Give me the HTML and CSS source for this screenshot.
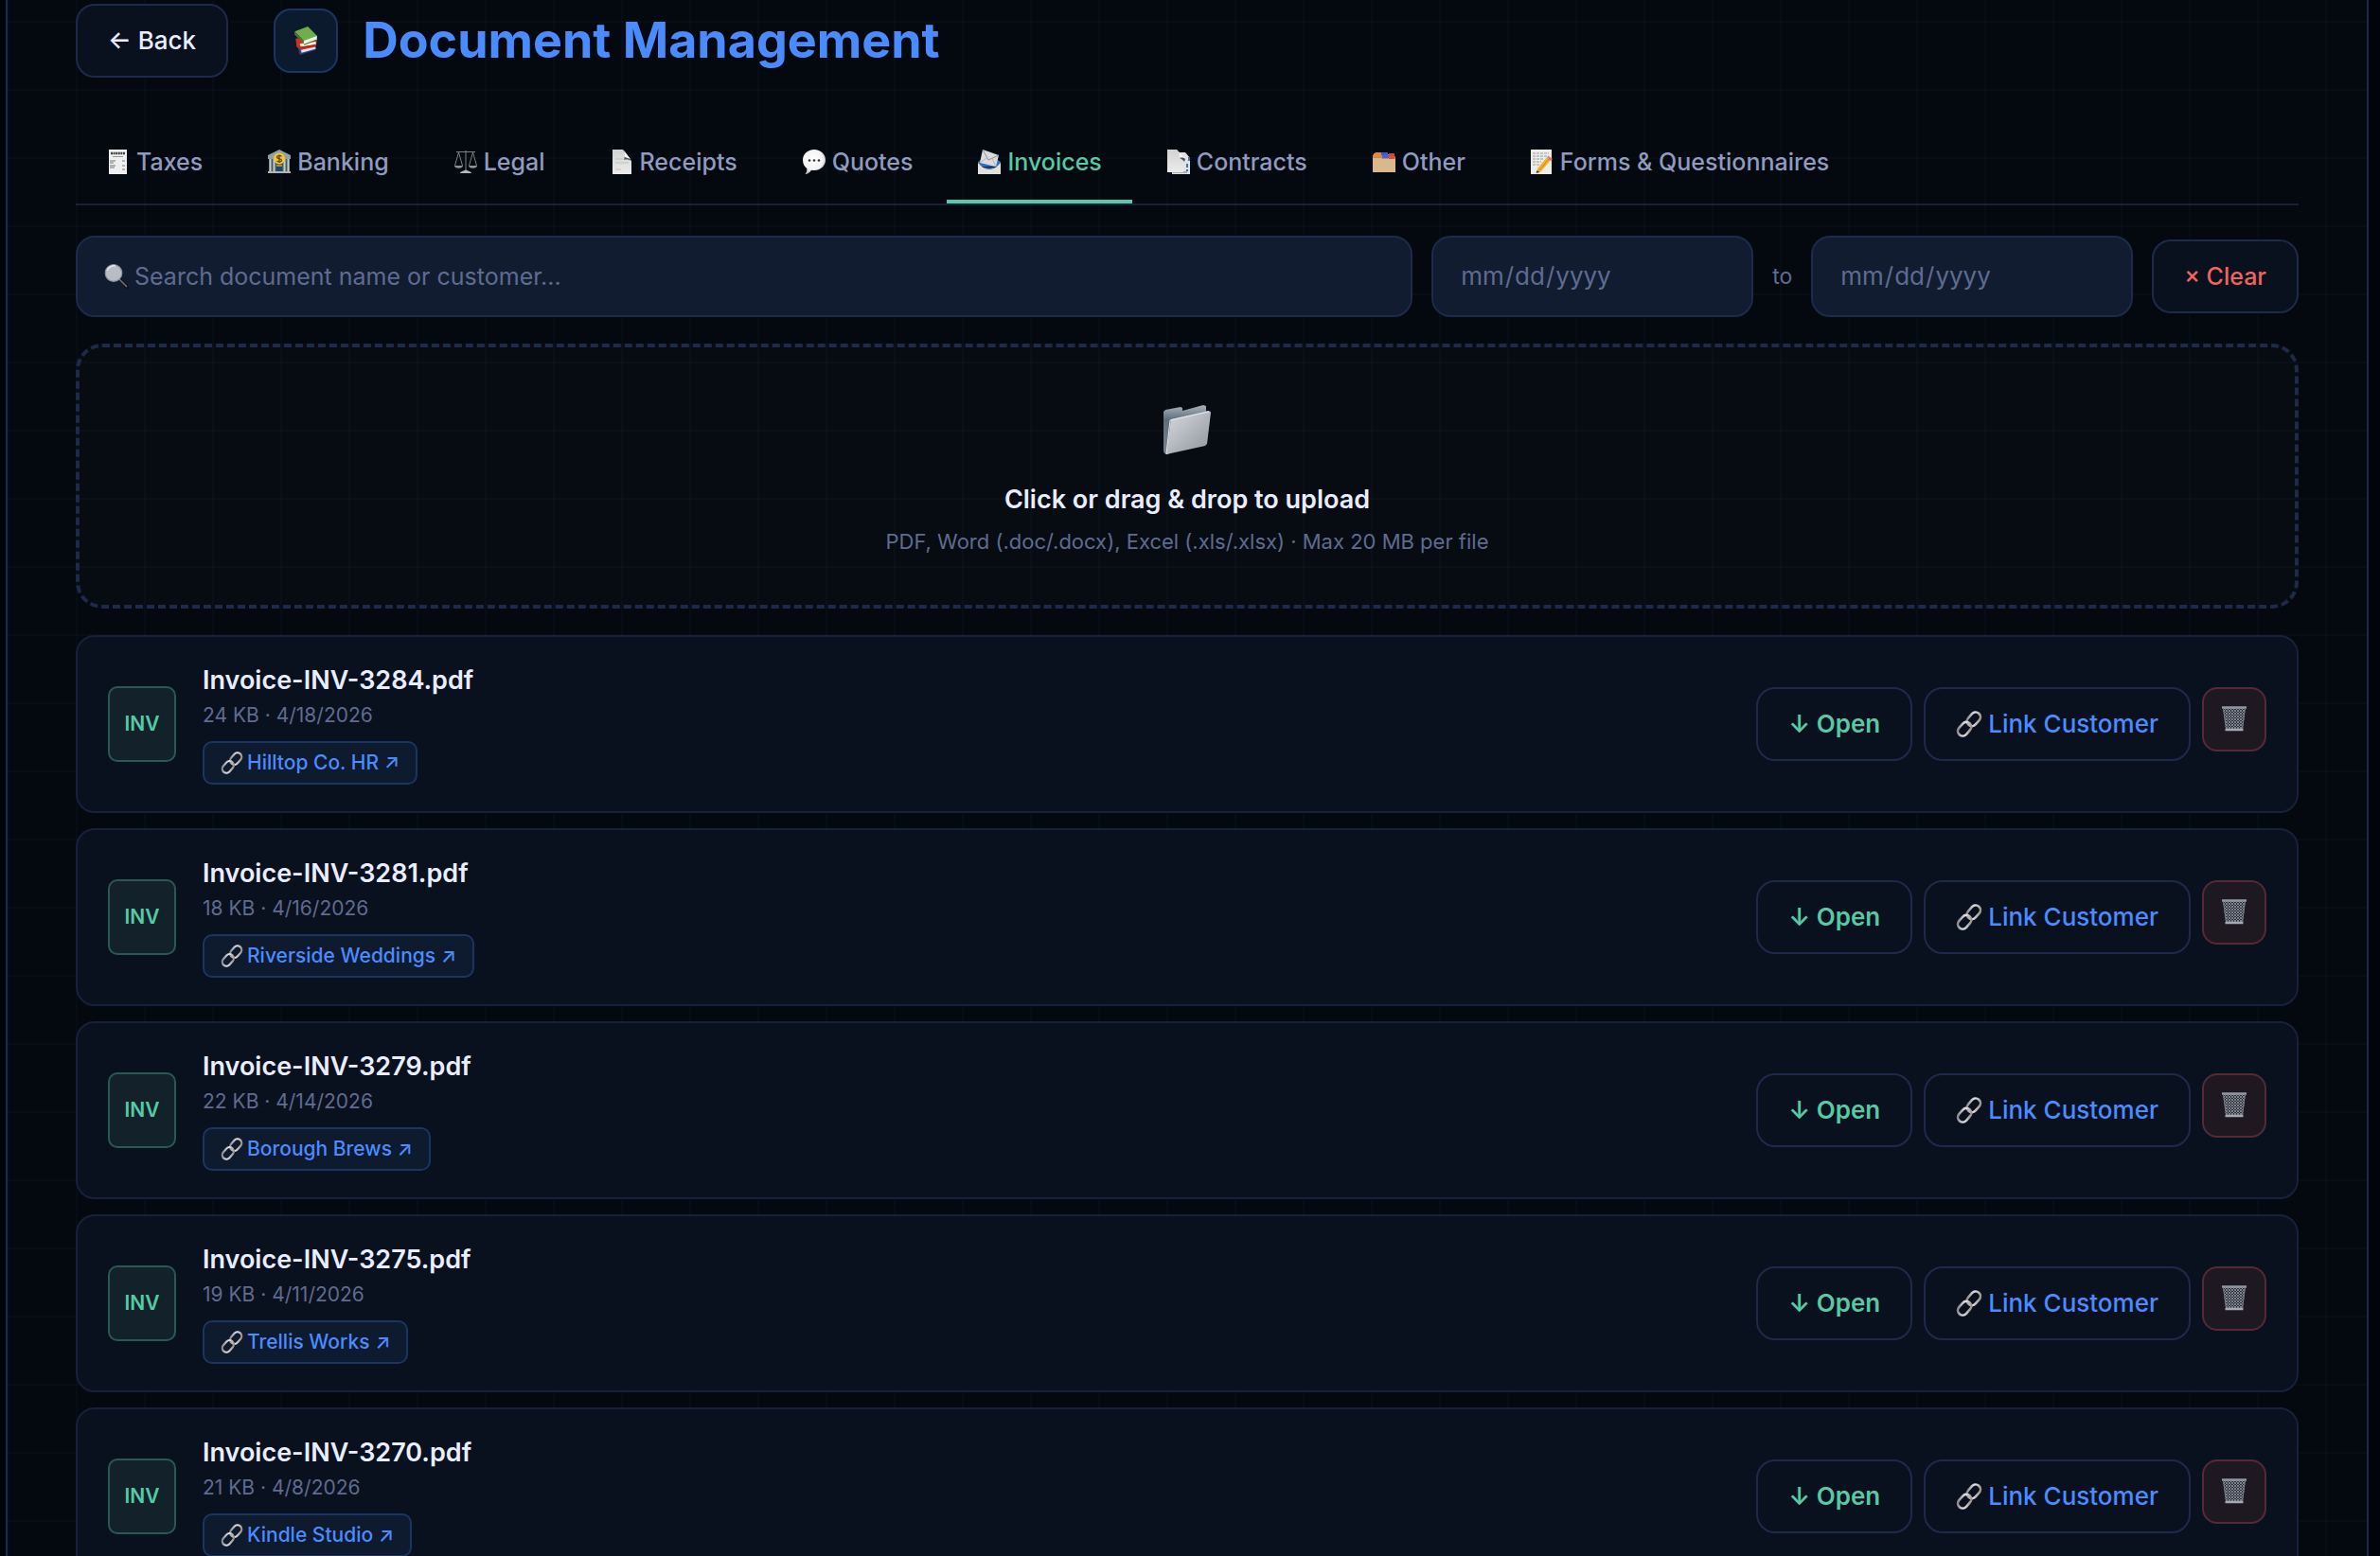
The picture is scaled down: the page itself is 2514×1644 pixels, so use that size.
FILE: index.html
```html
<!DOCTYPE html>
<html lang="en">
<head>
	<meta charset="UTF-8">
	<title>Document Management</title>
	<meta name="viewport" content="width=device-width, initial-scale=1">
	<link rel="stylesheet" href="styles.css">
</head>
<body>
	<!-- icon set -->
	<svg class="sprite" aria-hidden="true">
		<defs>
			<linearGradient id="gPaper" x1="0" y1="0" x2="0" y2="1"><stop offset="0" stop-color="#d2d2d2"/><stop offset="1" stop-color="#ececec"/></linearGradient>
			<linearGradient id="gFront" x1="0" y1="0" x2="1" y2="1"><stop offset="0" stop-color="#d5dae3"/><stop offset=".5" stop-color="#b4b8be"/><stop offset="1" stop-color="#8f9499"/></linearGradient>
			<linearGradient id="gBack" x1="0" y1="0" x2="0" y2="1"><stop offset="0" stop-color="#a9b3bd"/><stop offset=".3" stop-color="#5e6c7a"/><stop offset="1" stop-color="#7c858e"/></linearGradient>
			<linearGradient id="gMetal" x1="0" y1="0" x2="1" y2="1"><stop offset="0" stop-color="#77757a"/><stop offset=".5" stop-color="#e4e4ea"/><stop offset="1" stop-color="#8a8078"/></linearGradient>
			<radialGradient id="gBubble" cx=".45" cy=".4" r=".6"><stop offset="0" stop-color="#fff"/><stop offset=".7" stop-color="#f2f2f2"/><stop offset="1" stop-color="#bdbdbd"/></radialGradient>
			<pattern id="pMesh" width="3" height="3" patternUnits="userSpaceOnUse"><path d="M0 0l3 3M3 0L0 3" stroke="#8d95a3" stroke-width=".8"/></pattern>
		</defs>
		<symbol id="books" viewBox="0 0 24 28">
			<path d="M4 19l15-3 3 7-16 5z" fill="#2b3f9b"/><path d="M7 23l14-4 1 3-14 4z" fill="#e8e6e1"/>
			<path d="M2 12l15-2 6 4-1 6-15 3-4-3z" fill="#d2301f"/><path d="M6 17l16-2v3L7 20z" fill="#f1efe9"/><path d="M6 21l16-3" stroke="#a01c12" stroke-width="1"/>
			<path d="M1 5L14 0l9 9-13 5z" fill="#6fae4c"/><path d="M1 5l9 9v3L1 8z" fill="#3f7d2b"/><path d="M10 14l13-5v4l-13 5z" fill="#eef1ea"/><path d="M10 18l13-5" stroke="#3f7d2b" stroke-width="1"/>
		</symbol>
		<symbol id="receipt" viewBox="0 0 26 26">
			<path d="M3 0h19v26H3z" fill="#efefef"/><path d="M5 4h15" stroke="#444" stroke-width="2.4" stroke-dasharray="2 .6"/><path d="M7 7.500h11" stroke="#999" stroke-width="1"/>
			<path d="M4 12h6M4 14h4M4 17h6M4 19h5M17 12h3M17 17h3M17 21h3" stroke="#777" stroke-width="1.200"/>
		</symbol>
		<symbol id="bank" viewBox="0 0 26 26">
			<path d="M13 0l12 6v4H1V6z" fill="#8fa3a3"/><path d="M2 10h22v14H2z" fill="#4c5a5c"/><path d="M3.500 10v13M7.500 10v13M18.500 10v13M22.500 10v13" stroke="#c3cfcf" stroke-width="2"/>
			<path d="M10 16h6v8h-6z" fill="#174a78"/><path d="M10 17h6" stroke="#d9a42c" stroke-width="1.500"/><path d="M1 24h24" stroke="#b4b4aa" stroke-width="2"/>
			<circle cx="13" cy="9.500" r="6" fill="#f2c62e"/><path d="M15.500 7.500c-1-1.500-5-1.400-5 .5 0 2.200 5 1.200 5 3.500 0 1.800-4 2-5 .3M13 5.500v8.500" fill="none" stroke="#5c4a10" stroke-width="1.300"/>
		</symbol>
		<symbol id="scales" viewBox="0 0 26 26">
			<path d="M3 2.500h20M13 1v20M5.500 3L1.500 17M5.500 3l4 14M20.500 3l-4 14M20.500 3l4 14" fill="none" stroke="#7d8088" stroke-width="1"/>
			<path d="M1 17h9c0 3.500-9 3.500-9 0zM16 17h9c0 3.500-9 3.500-9 0z" fill="#8f929a"/><path d="M7 25c0-2 4-2 6-4 2 2 6 2 6 4z" fill="#b5b7bd"/>
		</symbol>
		<symbol id="page" viewBox="0 0 26 26">
			<path d="M3 0h11l9 12v14H3z" fill="url(#gPaper)"/><path d="M14 0c3 4 2 8 1 11 3-1 6 0 8 1z" fill="#55585c"/><path d="M15 1l7 9-6-2z" fill="#f7f7f7"/><path d="M6 10h8M6 14h14M6 21h6" stroke="#c2c2c2" stroke-width="1"/>
		</symbol>
		<symbol id="bubble" viewBox="0 0 26 26">
			<path d="M13 0c7 0 12 5 12 11S20 22 13 22c-1 0-2 0-3-.3C8.500 24 6 26 3.500 26c1.500-2 2-3.500 1.800-6C2.500 18 1 15 1 11 1 5 6 0 13 0z" fill="url(#gBubble)"/>
			<circle cx="8" cy="11.500" r="1.300" fill="#333"/><circle cx="13" cy="11.500" r="1.300" fill="#333"/><circle cx="18" cy="11.500" r="1.300" fill="#333"/>
		</symbol>
		<symbol id="envelope" viewBox="0 0 26 26">
			<path d="M1 13l3-2h18l3 2v5H1z" fill="#2e6fc0"/><path d="M6 0l17 6-3 12-17-4z" fill="#d9dbdd"/><path d="M6 0l6 11 11-5" fill="none" stroke="#8e9296" stroke-width="1"/><path d="M3 14l7-5M20 18l-4-9" stroke="#a9acb0" stroke-width=".8"/>
			<path d="M1 14l4 4c4 3 12 3 16 0l4-4v12H1z" fill="#e3e0dc"/><path d="M6 18c3 4 11 4 14 0-3 1.500-11 1.500-14 0z" fill="#2e6fc0"/>
		</symbol>
		<symbol id="pages" viewBox="0 0 26 26">
			<path d="M8 3h12l5 6v17H6z" fill="#e2e2e2"/><path d="M24 8v4M22 15v4M22 21v2" stroke="#2b78c6" stroke-width="2"/><path d="M7 24h15" stroke="#777" stroke-width="1"/>
			<path d="M1 0h10l9 10-2 14H1z" fill="url(#gPaper)"/><path d="M11 0c3 2 3 6 3 9 3 0 5 0 6 1z" fill="#f3f3f3"/><path d="M14 9c3-1 5 0 6 1l-1 3c-1-2-3-3-5-4z" fill="#4b4e52"/>
		</symbol>
		<symbol id="dividers" viewBox="0 0 26 26">
			<path d="M1 6l3-3h6l1 2h12l2 3v15H1z" fill="#c28e54"/><path d="M2 4h7v4H2z" fill="#e8893a"/><path d="M10 3h7v3h-7z" fill="#3d57d6"/><path d="M18 4h6v3h-6z" fill="#d9443c"/><path d="M11 6h7v3h-7z" fill="#4663e0"/><path d="M18 7h6v3h-6z" fill="#db4f40"/>
			<path d="M1 9h9l1 1h14v14H1z" fill="#d9b98b"/>
		</symbol>
		<symbol id="memo" viewBox="0 0 26 26">
			<path d="M1 0h22v26H1z" fill="#ececea"/><path d="M3 4h17M3 7h17M3 10h12M3 13h9M3 16h7" stroke="#9a9a9a" stroke-width="1" stroke-dasharray="3 1"/>
			<path d="M8 20L18 8l4 3-10 12-5 2z" fill="#f0b429"/><path d="M18 8l2-1 4 3-2 2z" fill="#e5736c"/><path d="M10 22l10-12" stroke="#c9851a" stroke-width="1"/><path d="M7.500 22l3 2-4 1z" fill="#444"/>
		</symbol>
		<symbol id="magnifier" viewBox="0 0 26 26">
			<path d="M17 16l7 8" stroke="#141416" stroke-width="4" stroke-linecap="round"/><path d="M16 16l8 8" stroke="#77787c" stroke-width="1.500"/>
			<circle cx="10" cy="9.500" r="8.800" fill="#b9bcc3" stroke="#8f959c" stroke-width="1.200"/><path d="M3 7c1-3 5-6 9-5" fill="none" stroke="#e2e9f2" stroke-width="1.500"/>
		</symbol>
		<symbol id="folder" viewBox="0 0 52 52">
			<path d="M1 7l2-2 16-3 2 1v3l22-6 3 1v10L6 52c-4 0-5-2-5-5z" fill="url(#gBack)"/><path d="M9 15l39-9c2 0 3 1 3 2l-4 33-2 2L4 52z" fill="url(#gFront)"/><path d="M4 52L8 16l41-9" fill="none" stroke="#e4e8ee" stroke-width="1"/>
		</symbol>
		<symbol id="link" viewBox="0 0 26 26">
			<g fill="none" stroke="url(#gMetal)" stroke-width="2.400"><rect x="-7.500" y="-4.800" width="15" height="9.600" rx="4.800" transform="translate(17.500 8.200) rotate(-48)"/><rect x="-7.500" y="-4.800" width="15" height="9.600" rx="4.800" transform="translate(8.500 17.800) rotate(-48)"/></g>
		</symbol>
		<symbol id="trash" viewBox="0 0 28 28">
			<path d="M2 2h24l-3 24H5z" fill="#2f3138"/><path d="M2 2h24l-3 24H5z" fill="url(#pMesh)"/><path d="M1 2.500h26" stroke="#8f98a3" stroke-width="2.500"/><path d="M4.500 26h19" stroke="#a3a9b1" stroke-width="2.500"/><path d="M2.500 3l3 22M25.500 3l-3 22" stroke="#767c86" stroke-width="1"/>
		</symbol>
	</svg>

	<main class="shell">
		<header class="page-head">
			<button class="btn btn-back" type="button">← Back</button>
			<span class="head-icon"><svg class="ico-books"><use href="#books"/></svg></span>
			<h1>Document Management</h1>
		</header>

		<nav class="tabs">
			<a class="tab" href="#"><svg class="ico"><use href="#receipt"/></svg>Taxes</a>
			<a class="tab" href="#"><svg class="ico"><use href="#bank"/></svg>Banking</a>
			<a class="tab" href="#"><svg class="ico"><use href="#scales"/></svg>Legal</a>
			<a class="tab" href="#"><svg class="ico"><use href="#page"/></svg>Receipts</a>
			<a class="tab" href="#"><svg class="ico"><use href="#bubble"/></svg>Quotes</a>
			<a class="tab active" href="#"><svg class="ico"><use href="#envelope"/></svg>Invoices</a>
			<a class="tab" href="#"><svg class="ico"><use href="#pages"/></svg>Contracts</a>
			<a class="tab" href="#"><svg class="ico"><use href="#dividers"/></svg>Other</a>
			<a class="tab" href="#"><svg class="ico"><use href="#memo"/></svg>Forms &amp; Questionnaires</a>
		</nav>

		<form class="filters">
			<label class="field search">
				<svg class="ico"><use href="#magnifier"/></svg>
				<input type="text" placeholder="Search document name or customer..." aria-label="Search documents">
			</label>
			<input class="field date" type="date" id="from" aria-label="From date">
			<label class="to" for="until">to</label>
			<input class="field date" type="date" id="until">
			<button class="btn btn-clear" type="reset">× Clear</button>
		</form>

		<button class="dropzone" type="button">
			<svg class="ico-folder"><use href="#folder"/></svg>
			<span class="drop-title">Click or drag &amp; drop to upload</span>
			<span class="drop-hint">PDF, Word (.doc/.docx), Excel (.xls/.xlsx) · Max 20 MB per file</span>
		</button>

		<section class="docs">
			<article class="doc">
				<span class="badge">INV</span>
				<div class="info">
					<div class="name">Invoice-INV-3284.pdf</div>
					<div class="meta">24 KB · 4/18/2026</div>
					<a class="chip" href="#"><svg class="ico"><use href="#link"/></svg>Hilltop Co. HR ↗</a>
				</div>
				<div class="actions">
					<button class="btn btn-open" type="button">↓ Open</button>
					<button class="btn btn-link" type="button"><svg class="ico"><use href="#link"/></svg>Link Customer</button>
					<button class="btn-del" type="button" aria-label="Delete"><svg class="ico-trash"><use href="#trash"/></svg></button>
				</div>
			</article>
			<article class="doc">
				<span class="badge">INV</span>
				<div class="info">
					<div class="name">Invoice-INV-3281.pdf</div>
					<div class="meta">18 KB · 4/16/2026</div>
					<a class="chip" href="#"><svg class="ico"><use href="#link"/></svg>Riverside Weddings ↗</a>
				</div>
				<div class="actions">
					<button class="btn btn-open" type="button">↓ Open</button>
					<button class="btn btn-link" type="button"><svg class="ico"><use href="#link"/></svg>Link Customer</button>
					<button class="btn-del" type="button" aria-label="Delete"><svg class="ico-trash"><use href="#trash"/></svg></button>
				</div>
			</article>
			<article class="doc">
				<span class="badge">INV</span>
				<div class="info">
					<div class="name">Invoice-INV-3279.pdf</div>
					<div class="meta">22 KB · 4/14/2026</div>
					<a class="chip" href="#"><svg class="ico"><use href="#link"/></svg>Borough Brews ↗</a>
				</div>
				<div class="actions">
					<button class="btn btn-open" type="button">↓ Open</button>
					<button class="btn btn-link" type="button"><svg class="ico"><use href="#link"/></svg>Link Customer</button>
					<button class="btn-del" type="button" aria-label="Delete"><svg class="ico-trash"><use href="#trash"/></svg></button>
				</div>
			</article>
			<article class="doc">
				<span class="badge">INV</span>
				<div class="info">
					<div class="name">Invoice-INV-3275.pdf</div>
					<div class="meta">19 KB · 4/11/2026</div>
					<a class="chip" href="#"><svg class="ico"><use href="#link"/></svg>Trellis Works ↗</a>
				</div>
				<div class="actions">
					<button class="btn btn-open" type="button">↓ Open</button>
					<button class="btn btn-link" type="button"><svg class="ico"><use href="#link"/></svg>Link Customer</button>
					<button class="btn-del" type="button" aria-label="Delete"><svg class="ico-trash"><use href="#trash"/></svg></button>
				</div>
			</article>
			<article class="doc">
				<span class="badge">INV</span>
				<div class="info">
					<div class="name">Invoice-INV-3270.pdf</div>
					<div class="meta">21 KB · 4/8/2026</div>
					<a class="chip" href="#"><svg class="ico"><use href="#link"/></svg>Kindle Studio ↗</a>
				</div>
				<div class="actions">
					<button class="btn btn-open" type="button">↓ Open</button>
					<button class="btn btn-link" type="button"><svg class="ico"><use href="#link"/></svg>Link Customer</button>
					<button class="btn-del" type="button" aria-label="Delete"><svg class="ico-trash"><use href="#trash"/></svg></button>
				</div>
			</article>
		</section>
	</main>
</body>
</html>
```

FILE: styles.css
```css
:root{
	--line:#1e2a4a;
	--card:#0a111e;
	--field:#111c30;
	--text:#e8eeff;
	--muted:#5f6b90;
	--blue:#4a8cff;
	--green:#56c9a5;
	--red:#f0645f;
}
*{box-sizing:border-box;}
body{
	margin:0;
	background:#02040c;
	color:var(--text);
	font-family:Inter,"Open Sans",sans-serif;
	font-size:25px;
	line-height:32px;
}
button,input{font:inherit;color:inherit;}
button{cursor:pointer;}
a{text-decoration:none;color:inherit;}
.sprite{position:absolute;width:0;height:0;}
.ico{
	flex:none;
	width:26px;height:26px;
}

/* main panel with a faint grid */
.shell{
	height:100vh;
	margin:0 12px 0 6px;
	padding:4px 72px 0;
	overflow:hidden;
	border:solid var(--line);
	border-width:0 2px;
	background:
		linear-gradient(rgba(74,110,220,.035) 2px,transparent 2px) 0 22px / 72px 72px,
		linear-gradient(90deg,rgba(74,110,220,.035) 2px,transparent 2px) 0 0 / 72px 72px,
		#04090f;
}

/* header */
.page-head{
	display:flex;
	align-items:center;
	height:78px;
}
h1{
	margin:0 0 0 26px;
	color:var(--blue);
	font-size:52px;
	line-height:64px;
	font-weight:700;
}
.head-icon{
	display:flex;
	align-items:center;
	justify-content:center;
	width:68px;height:68px;
	margin-left:48px;
	border:2px solid #1b3563;
	border-radius:18px;
	background:#0c1a2d;
}
.ico-books{width:28px;height:30px;}
.btn{
	display:inline-flex;
	align-items:center;
	gap:6px;
	height:78px;
	padding:0 32px;
	border:2px solid var(--line);
	border-radius:20px;
	background:var(--card);
	font-size:26px;
	font-weight:500;
	white-space:nowrap;
}
.btn .ico{width:28px;height:28px;}
.btn-clear{
	color:var(--red);
	font-size:25px;
}
.btn-open{
	color:var(--green);
	font-weight:600;
}
.btn-link{color:var(--blue);}

/* tabs */
.tabs{
	display:flex;
	gap:4px;
	margin-top:44px;
	border-bottom:2px solid #18213b;
}
.tab{
	display:flex;
	align-items:center;
	gap:6px;
	height:89px;
	padding:4px 32px 0;
	border-bottom:4px solid transparent;
	color:#8f9bbf;
	font-weight:500;
}
.tab.active{
	border-color:var(--green);
	color:var(--green);
}

/* filters */
.filters{
	display:flex;
	align-items:center;
	gap:20px;
	margin-top:32px;
}
.field{
	height:86px;
	padding:0 28px;
	border:2px solid var(--line);
	border-radius:20px;
	background:var(--field);
	color:var(--muted);
}
.search{
	display:flex;
	flex:1;
	align-items:center;
	gap:6px;
}
.search input{
	flex:1;
	padding:0;
	border:0;
	outline:0;
	background:none;
}
.search input::placeholder{color:var(--muted);}
.date{
	width:340px;
	font-size:26px;
}
.date::-webkit-calendar-picker-indicator{display:none;}
.to{
	color:var(--muted);
	font-size:23px;
}

/* upload */
.dropzone{
	display:flex;
	flex-direction:column;
	align-items:center;
	width:100%;
	height:280px;
	margin-top:28px;
	padding:61px 0 0;
	border:4px dashed var(--line);
	border-radius:28px;
	background:rgba(255,255,255,.015);
}
.ico-folder{width:52px;height:52px;}
.drop-title{
	margin-top:32px;
	font-size:27px;
	font-weight:600;
}
.drop-hint{
	margin-top:12px;
	color:var(--muted);
	font-size:22px;
}

/* document list */
.docs{
	display:flex;
	flex-direction:column;
	gap:16px;
	margin-top:28px;
}
.doc{
	display:flex;
	align-items:center;
	gap:28px;
	padding:28px 32px;
	border:2px solid #18213b;
	border-radius:20px;
	background:var(--card);
}
.badge{
	display:flex;
	align-items:center;
	justify-content:center;
	width:72px;height:80px;
	border:2px solid #285a53;
	border-radius:10px;
	background:#13222a;
	color:var(--green);
	font-size:21px;
	font-weight:600;
}
.info{flex:1;}
.name{
	font-size:27px;
	line-height:36px;
	font-weight:600;
}
.meta{
	margin-top:3px;
	color:var(--muted);
	font-size:21px;
}
.chip{
	display:inline-flex;
	align-items:center;
	gap:4px;
	height:46px;
	margin-top:11px;
	padding:0 17px;
	border:2px solid #1b3563;
	border-radius:10px;
	background:#0e1a2e;
	color:var(--blue);
	font-size:21px;
	font-weight:500;
	vertical-align:top;
}
.chip .ico{width:24px;height:24px;}
.actions{
	display:flex;
	align-items:flex-start;
	gap:12px;
}
.btn-del{
	display:flex;
	justify-content:center;
	width:68px;height:68px;
	padding:17px 0 0;
	border:2px solid #532b35;
	border-radius:16px;
	background:#1e1821;
}
.ico-trash{width:28px;height:28px;}
```
